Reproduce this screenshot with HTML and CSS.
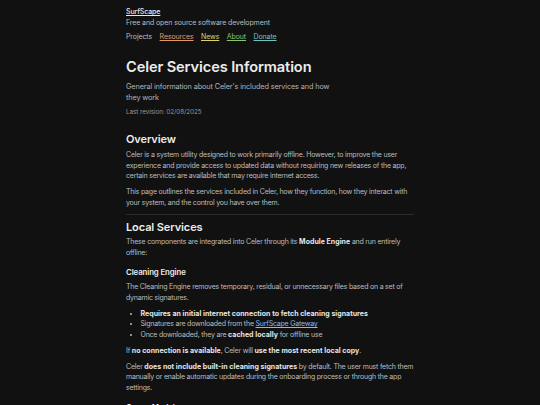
FILE: index.html
```html
<!DOCTYPE html>
<html lang="en">
<head>
<meta charset="utf-8">
<title>Celer Services Information</title>
<link rel="stylesheet" href="styles.css">
</head>
<body>
<div class="page">
  <header class="site">
    <a class="brand" href="#">SurfScape</a>
    <div class="tagline">Free and open source software development</div>
    <nav class="nav">
      <span class="nav-cur">Projects</span>
      <a class="nav-res" href="#">Resources</a>
      <a class="nav-news" href="#">News</a>
      <a class="nav-about" href="#">About</a>
      <a class="nav-donate" href="#">Donate</a>
    </nav>
  </header>
  <main>
    <h1 class="title">Celer Services Information</h1>
    <p class="lead">General information about Celer's included services and how they work</p>
    <p class="rev">Last revision: 02/08/2025</p>

    <h2>Overview</h2>
    <p>Celer is a system utility designed to work primarily offline. However, to improve the user experience and provide access to updated data without requiring new releases of the app, certain services are available that may require internet access.</p>
    <p>This page outlines the services included in Celer, how they function, how they interact with your system, and the control you have over them.</p>
    <hr>
    <h2 class="after-hr">Local Services</h2>
    <p>These components are integrated into Celer through its <b>Module Engine</b> and run entirely offline:</p>
    <h3>Cleaning Engine</h3>
    <p>The Cleaning Engine removes temporary, residual, or unnecessary files based on a set of dynamic signatures.</p>
    <ul>
      <li><b>Requires an initial internet connection to fetch cleaning signatures</b></li>
      <li>Signatures are downloaded from the <a class="link" href="#">SurfScape Gateway</a></li>
      <li>Once downloaded, they are <b>cached locally</b> for offline use</li>
    </ul>
    <p>If <b>no connection is available</b>, Celer will <b>use the most recent local copy</b>.</p>
    <p>Celer <b>does not include built-in cleaning signatures</b> by default. The user must fetch them manually or enable automatic updates during the onboarding process or through the app settings.</p>
    <h3>Opsec Module</h3>
  </main>
</div>
</body>
</html>
```
FILE: styles.css
```css
html, body {
  margin: 0;
  padding: 0;
  background: #111111;
}
body {
  font-family: Inter, "Noto Sans", sans-serif;
  color: #bdbdbd;
  font-size: 7px;
  letter-spacing: -0.21px;
  line-height: 10.5px;
}
.page {
  width: 288px;
  margin: 0 auto;
  padding-top: 7px;
}
.site {
  font-size: 7px;
  letter-spacing: -0.1px;
  line-height: 10.5px;
}
.brand {
  color: #e8e8e8;
  text-decoration: underline;
  font-weight: 500;
}
.tagline {
  color: #bcbcbc;
}
.nav {
  display: flex;
  gap: 7.5px;
  margin-top: 4px;
}
.nav a { text-decoration: underline; }
.nav-cur { color: #bcbcbc; }
.nav-res { color: #e09a66; }
.nav-news { color: #d9d46a; }
.nav-about { color: #8fc46c; }
.nav-donate { color: #6ec4c0; }
.title {
  font-size: 14.6px;
  letter-spacing: -0.1px;
  line-height: 20px;
  font-weight: 600;
  color: #ececec;
  margin: 14px 0 4px;
}
.lead {
  font-size: 7.3px;
  letter-spacing: -0.12px;
  line-height: 11px;
  color: #b4b4b4;
  width: 212px;
  margin: 0 0 5px;
}
.rev {
  font-size: 6.3px;
  letter-spacing: -0.05px;
  line-height: 9px;
  color: #9a9a9a;
  margin: 0 0 14px;
}
h2 {
  font-size: 11px;
  letter-spacing: -0.1px;
  line-height: 16px;
  font-weight: 600;
  color: #ececec;
  margin: 0 0 3.7px;
}
h2.after-hr {
  margin-bottom: 2.5px;
}
h3 {
  font-size: 7.8px;
  letter-spacing: -0.1px;
  line-height: 12px;
  font-weight: 600;
  color: #ececec;
  margin: 8px 0 4.3px;
}
p {
  margin: 0 0 5.5px;
}
b {
  color: #e6e6e6;
  font-weight: 700;
  letter-spacing: 0.02px;
}
hr {
  border: 0;
  border-top: 1px solid #2c2c2c;
  margin: 6px 0 3.5px;
}
ul {
  margin: 0 0 5.5px;
  padding-left: 14.5px;
  line-height: 10.5px;
}
.link {
  color: #8ab8f0;
  text-decoration: underline;
}
```
